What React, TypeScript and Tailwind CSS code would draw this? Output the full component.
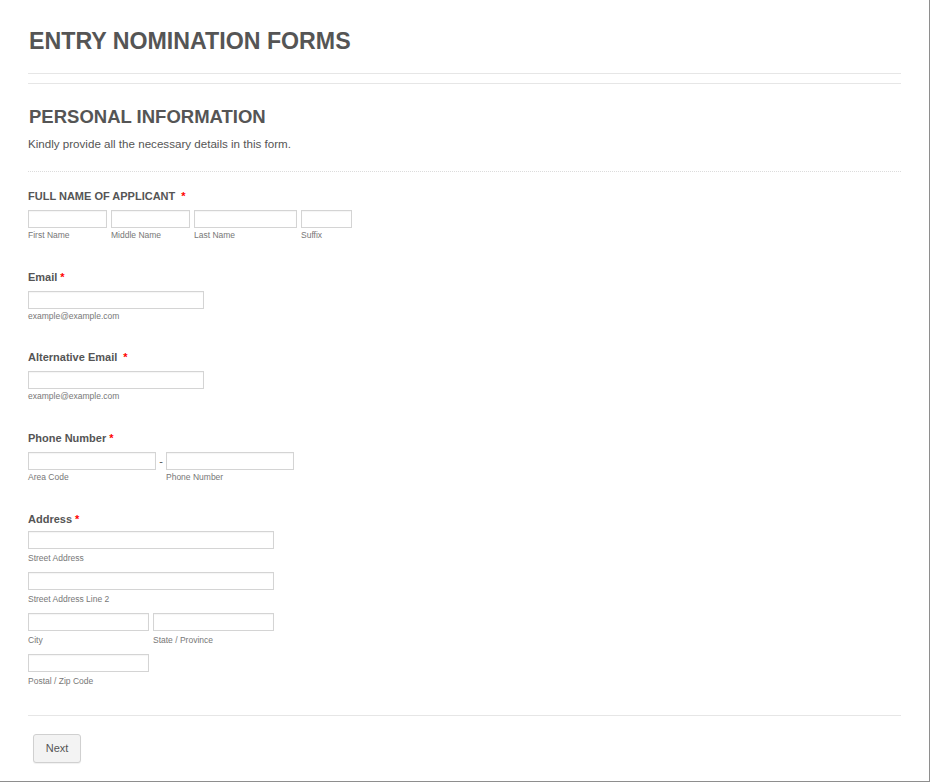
import React from "react";

const font = { fontFamily: '"Liberation Sans", Arial, sans-serif' };

function Req({ wide }: { wide?: boolean }) {
  return <span className={`text-[#ff0000] ${wide ? "ml-[6px]" : "ml-[3px]"}`}>*</span>;
}

function Label({ children }: { children: React.ReactNode }) {
  return <div className="text-[11px] leading-[14px] font-bold text-[#555]">{children}</div>;
}

function Input({ w, sub, tall }: { w: string; sub: string; tall?: boolean }) {
  return (
    <div className={`flex flex-col ${w}`}>
      <div className="h-[18px] w-full border border-[#d4d4d4] bg-white shadow-[inset_0_1px_1px_rgba(0,0,0,0.04)]" />
      <div className={`${tall ? "mt-[4px]" : "mt-[2px]"} text-[8.5px] leading-[11px] text-[#777] whitespace-nowrap`}>{sub}</div>
    </div>
  );
}

export default function App() {
  return (
    <div style={font} className="w-[930px] h-[782px] bg-white border-r border-b border-[#8e8e8e] box-border overflow-hidden">
      <div className="px-[28px] pt-[27px]">
        <h1 className="text-[23.2px] leading-[28px] font-bold text-[#555] ml-[1px]">ENTRY NOMINATION FORMS</h1>
        <div className="mt-[18px] h-px bg-[#e6e6e6]" />
        <div className="mt-[9px] h-px bg-[#e6e6e6]" />
        <h2 className="mt-[22px] text-[18.5px] leading-[22px] font-bold text-[#555] ml-[1px]">PERSONAL INFORMATION</h2>
        <p className="mt-[9px] text-[11.6px] leading-[14px] text-[#555]">Kindly provide all the necessary details in this form.</p>
        <div className="mt-[20px] border-t border-dotted border-[#dcdcdc]" />

        <div className="mt-[17px]">
          <Label>
            FULL NAME OF APPLICANT<Req wide />
          </Label>
          <div className="mt-[7px] flex gap-[4px]">
            <Input w="w-[79px]" sub="First Name" />
            <Input w="w-[79px]" sub="Middle Name" />
            <Input w="w-[103px]" sub="Last Name" />
            <Input w="w-[51px]" sub="Suffix" />
          </div>
        </div>

        <div className="mt-[29px]">
          <Label>
            Email<Req />
          </Label>
          <div className="mt-[7px] flex">
            <Input w="w-[176px]" sub="example@example.com" />
          </div>
        </div>

        <div className="mt-[28px]">
          <Label>
            Alternative Email<Req wide />
          </Label>
          <div className="mt-[7px] flex">
            <Input w="w-[176px]" sub="example@example.com" />
          </div>
        </div>

        <div className="mt-[29px]">
          <Label>
            Phone Number<Req />
          </Label>
          <div className="mt-[7px] flex">
            <Input w="w-[128px]" sub="Area Code" />
            <div className="w-[10px] h-[18px] flex items-center justify-center text-[11px] text-[#555] leading-none">-</div>
            <Input w="w-[128px]" sub="Phone Number" />
          </div>
        </div>

        <div className="mt-[29px]">
          <Label>
            Address<Req />
          </Label>
          <div className="mt-[5px] flex flex-col gap-[8px]">
            <Input w="w-[246px]" sub="Street Address" tall />
            <Input w="w-[246px]" sub="Street Address Line 2" tall />
            <div className="flex gap-[4px]">
              <Input w="w-[121px]" sub="City" tall />
              <Input w="w-[121px]" sub="State / Province" tall />
            </div>
            <Input w="w-[121px]" sub="Postal / Zip Code" tall />
          </div>
        </div>

        <div className="mt-[28px] h-px bg-[#e6e6e6]" />
        <div className="mt-[18px] ml-[5px]">
          <button className="w-[48px] h-[29px] rounded-[3px] border border-[#d0d0d0] bg-[#f3f3f3] text-[11px] text-[#555] shadow-[0_1px_1px_rgba(0,0,0,0.06)]">
            Next
          </button>
        </div>
      </div>
    </div>
  );
}
